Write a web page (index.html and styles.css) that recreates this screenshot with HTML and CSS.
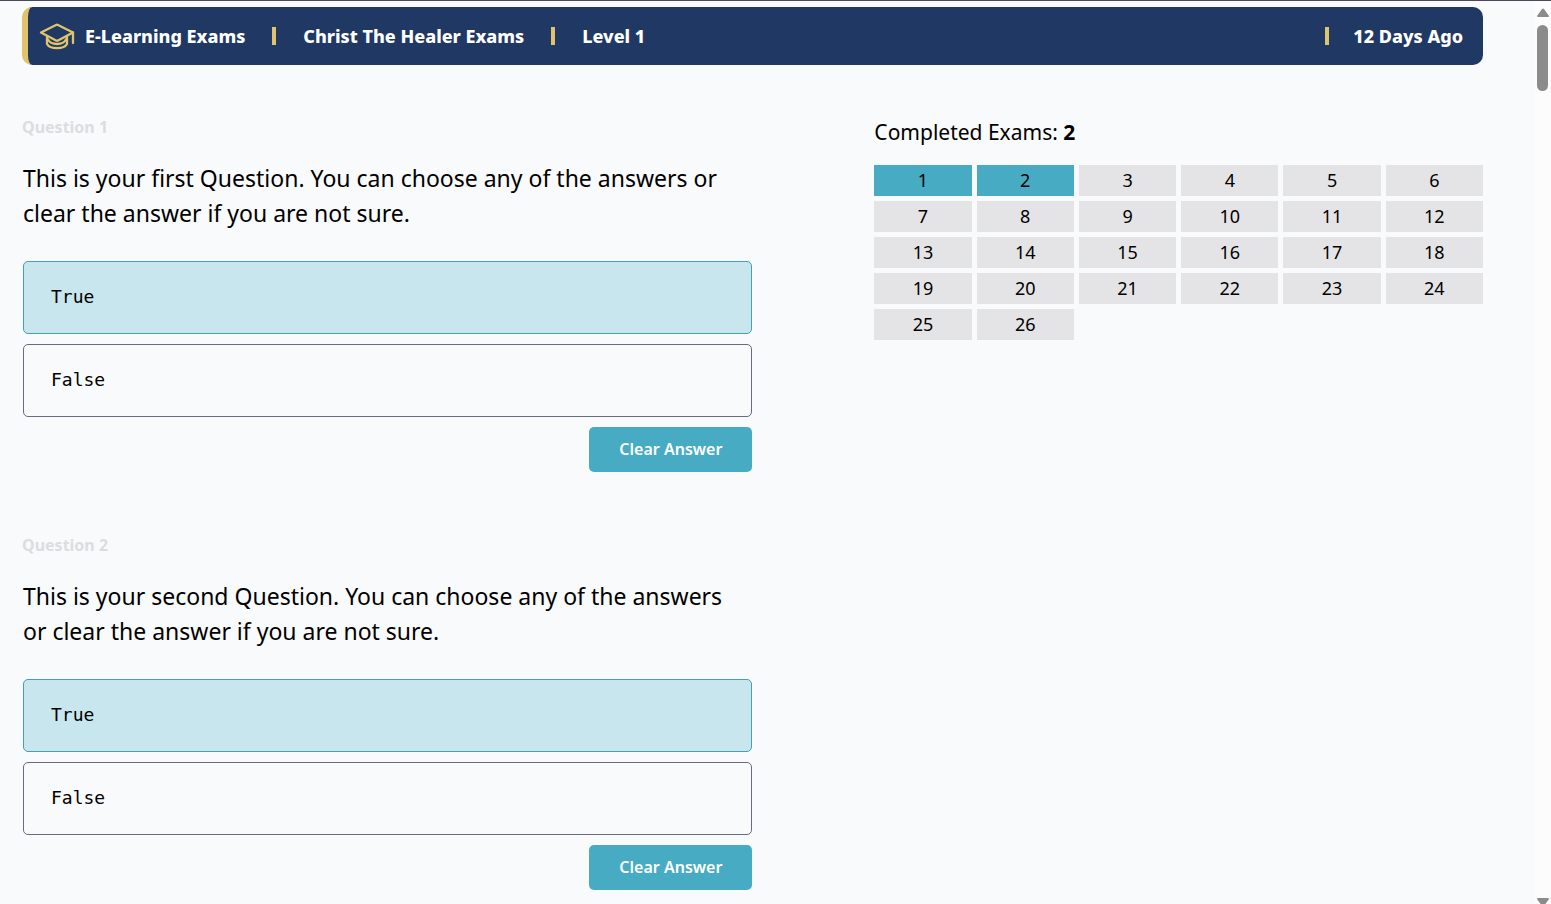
FILE: index.html
```html
<!DOCTYPE html>
<html lang="en">
<head>
  <meta charset="UTF-8" />
  <meta name="viewport" content="width=device-width, initial-scale=1.0" />
  <title>E-Learning Exams</title>
  <link rel="stylesheet" href="styles.css">
</head>
<body>
  <div class="page">
    <header class="exam-header">
      <svg class="logo" viewBox="0 0 36 28" aria-hidden="true">
        <path d="M2 10.500 L17 3 Q18 2.500 19 3 L34 10.500 L19 18.500 Q18 19 17 18.500 Z" />
        <path d="M8 14.500 V22 C11 27.500 25 27.500 28 22 V14.500" />
        <path d="M9 17.500 C12 23.500 24 23.500 27 17.500" />
        <path d="M34 10.500 V21" />
      </svg>
      <span>E-Learning Exams</span>
      <span class="divider"></span>
      <span>Christ The Healer Exams</span>
      <span class="divider"></span>
      <span>Level 1</span>
      <span class="divider push-right"></span>
      <span>12 Days Ago</span>
    </header>

    <main class="exam">
      <form class="questions">
        <section class="question">
          <h2 class="question-number">Question 1</h2>
          <p class="question-text" id="q1-text">This is your first Question. You can choose any of the answers or clear the answer if you are not sure.</p>
          <div class="answers" role="radiogroup" aria-labelledby="q1-text">
            <label class="answer"><input type="radio" name="q1" value="true" checked>True</label>
            <label class="answer"><input type="radio" name="q1" value="false">False</label>
          </div>
          <button type="button" class="clear-btn">Clear Answer</button>
        </section>

        <section class="question">
          <h2 class="question-number">Question 2</h2>
          <p class="question-text" id="q2-text">This is your second Question. You can choose any of the answers or clear the answer if you are not sure.</p>
          <div class="answers" role="radiogroup" aria-labelledby="q2-text">
            <label class="answer"><input type="radio" name="q2" value="true" checked>True</label>
            <label class="answer"><input type="radio" name="q2" value="false">False</label>
          </div>
          <button type="button" class="clear-btn">Clear Answer</button>
        </section>
      </form>

      <aside class="progress">
        <p class="completed">Completed Exams: <b>2</b></p>
        <nav class="number-grid">
          <a href="#" class="done">1</a>
          <a href="#" class="done">2</a>
          <a href="#">3</a>
          <a href="#">4</a>
          <a href="#">5</a>
          <a href="#">6</a>
          <a href="#">7</a>
          <a href="#">8</a>
          <a href="#">9</a>
          <a href="#">10</a>
          <a href="#">11</a>
          <a href="#">12</a>
          <a href="#">13</a>
          <a href="#">14</a>
          <a href="#">15</a>
          <a href="#">16</a>
          <a href="#">17</a>
          <a href="#">18</a>
          <a href="#">19</a>
          <a href="#">20</a>
          <a href="#">21</a>
          <a href="#">22</a>
          <a href="#">23</a>
          <a href="#">24</a>
          <a href="#">25</a>
          <a href="#">26</a>
        </nav>
      </aside>
    </main>
  </div>

  <div class="scrollbar" aria-hidden="true">
    <svg class="arrow" viewBox="0 0 12 9"><path d="M5 1 Q6 0 7 1 L12 8 Q12 9 11 9 H1 Q0 9 0 8 Z" /></svg>
    <div class="thumb"></div>
    <svg class="arrow arrow-down" viewBox="0 0 12 9"><path d="M0 1 Q0 0 1 0 H11 Q12 0 12 1 L7 8 Q6 9 5 8 Z" /></svg>
  </div>

  <script>
    document.querySelectorAll('.clear-btn').forEach(btn => {
      btn.addEventListener('click', () => {
        btn.parentElement.querySelectorAll('input').forEach(input => {
          input.checked = false;
        });
      });
    });
  </script>
</body>
</html>
```
FILE: styles.css
```css
* {
  box-sizing: border-box;
}
body {
  font-family: 'Noto Sans', sans-serif;
  background-color: #f9fafc;
  margin: 0;
  color: #000;
  border-top: 1px solid #4d4855;
}
.page {
  padding: 6px 68px 14px 22px;
}

/* header */
.exam-header {
  display: flex;
  align-items: center;
  height: 58px;
  padding: 0 20px 1px 11px;
  background-color: #1f3864;
  border-left: 6px solid #dfc46c;
  border-radius: 10px;
  color: #fff;
  font-size: 18px;
  font-weight: 800;
}
.logo {
  width: 36px;
  height: 28px;
  margin-right: 10px;
  fill: none;
  stroke: #dfc46c;
  stroke-width: 2.3;
  stroke-linecap: round;
  stroke-linejoin: round;
}
.divider {
  width: 4px;
  height: 18px;
  margin: 0 27px;
  background-color: #dfc46c;
}
.push-right {
  margin-left: auto;
  margin-right: 24px;
}

.exam {
  display: grid;
  grid-template-columns: 6fr 5fr;
  gap: 122px;
  padding-top: 50px;
}

/* questions */
.question {
  display: flex;
  flex-direction: column;
  margin-bottom: 61px;
}
.question:last-child {
  margin-bottom: 0;
}
.question-number {
  margin: 0 0 22px;
  font-size: 16px;
  line-height: 24px;
  color: #dcdde0;
}
.question-text {
  margin: 0 0 30px;
  padding: 0 16px 0 1px;
  font-size: 23px;
  line-height: 35px;
}
.answers {
  display: flex;
  flex-direction: column;
  gap: 10px;
  padding-left: 1px;
}
.answer {
  display: flex;
  align-items: center;
  height: 73px;
  padding: 0 27px 2px;
  border: 1px solid #6c6a7c;
  border-radius: 5px;
  font-family: 'DejaVu Sans Mono', monospace;
  font-size: 18px;
  cursor: pointer;
}
.answer input {
  appearance: none;
  width: 0;
  height: 0;
  margin: 0;
}
.answer:has(input:checked) {
  background-color: #c8e6ee;
  border-color: #45a0b0;
}
.clear-btn {
  align-self: flex-end;
  height: 45px;
  margin-top: 10px;
  padding: 0 30px 2px;
  border: none;
  border-radius: 5px;
  background-color: #46abc3;
  color: #fff;
  font-family: inherit;
  font-size: 16px;
  font-weight: 600;
  cursor: pointer;
}

/* progress */
.completed {
  margin: 0 0 15px;
  font-size: 21px;
  line-height: 35px;
}
.number-grid {
  display: grid;
  grid-template-columns: repeat(6, 1fr);
  gap: 5px;
}
.number-grid a {
  background-color: #e4e4e6;
  color: #000;
  font-size: 18px;
  line-height: 31px;
  text-align: center;
  text-decoration: none;
}
.number-grid .done {
  background-color: #46abc3;
}

/* scrollbar */
.scrollbar {
  position: fixed;
  top: 1px;
  right: 0;
  bottom: 0;
  display: flex;
  flex-direction: column;
  align-items: center;
  width: 17px;
  padding-top: 7px;
  background-color: #fcfcfd;
  overflow: hidden;
}
.arrow {
  width: 12px;
  height: 9px;
  fill: #8b8b8b;
}
.arrow-down {
  margin-top: auto;
  margin-bottom: -3px;
}
.thumb {
  width: 11px;
  height: 66px;
  margin-top: 8px;
  border-radius: 6px;
  background-color: #8b8b8b;
}
```
